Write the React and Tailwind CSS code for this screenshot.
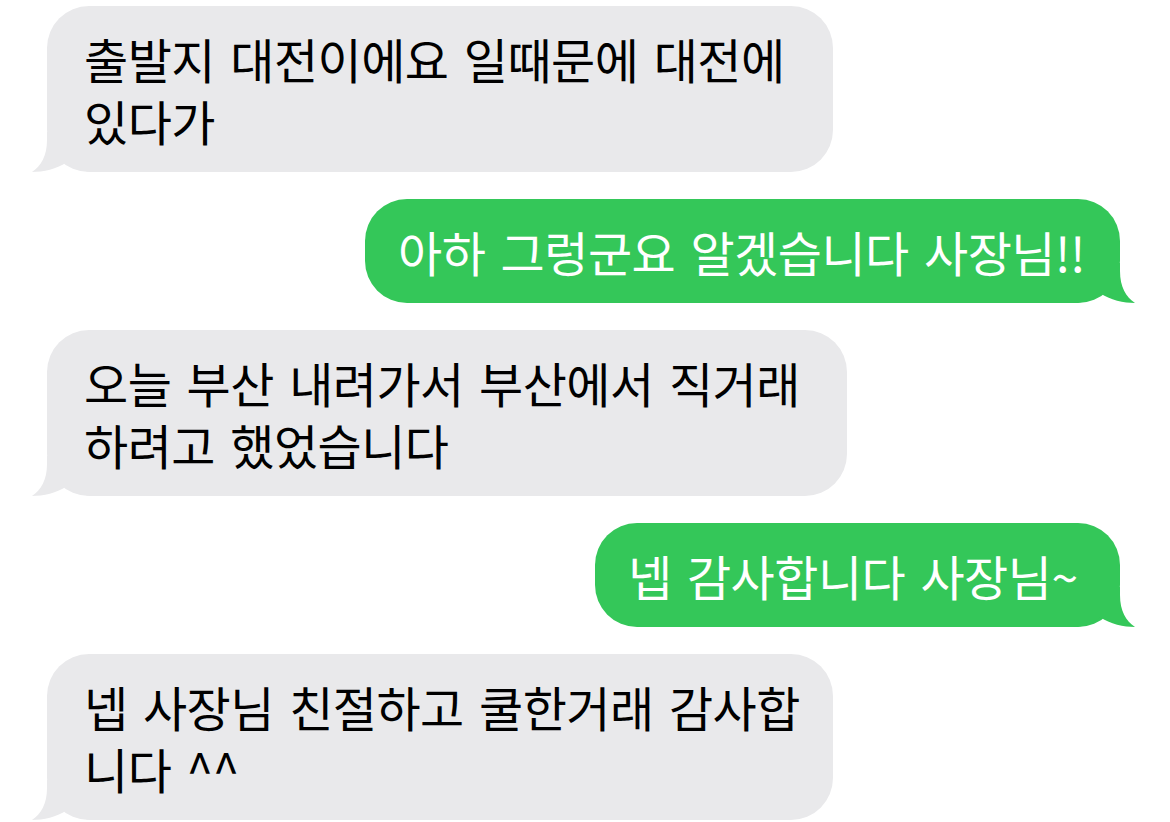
import { clsx } from 'clsx';

const messages = [
  { from: 'them', width: 'w-[786px]', text: '출발지 대전이에요 일때문에 대전에 있다가' },
  { from: 'me', width: 'w-[755px]', text: '아하 그렁군요 알겠습니다 사장님!!' },
  { from: 'them', width: 'w-[800px]', text: '오늘 부산 내려가서 부산에서 직거래 하려고 했었습니다' },
  { from: 'me', width: 'w-[525px]', text: '넵 감사합니다 사장님~' },
  { from: 'them', width: 'w-[786px]', text: '넵 사장님 친절하고 쿨한거래 감사합 니다 ^^' },
];

function Tail({ mine }) {
  return (
    <svg
      viewBox="0 0 64 40"
      className={clsx(
        'absolute bottom-0 h-[40px] w-[64px]',
        mine ? 'right-[-16px] -scale-x-100 fill-[#34c759]' : 'left-[-16px] fill-[#e9e9eb]'
      )}
    >
      <path d="M16 0 L16 8 C16 24 10 34 1 40 C12 40 26 37 36 30 C42 36 52 40 64 40 L64 0 Z" />
    </svg>
  );
}

function Bubble({ from, width, text }) {
  const mine = from === 'me';
  return (
    <div className={clsx('flex', mine ? 'justify-end pr-[50px]' : 'justify-start pl-[47px]')}>
      <div
        className={clsx(
          'relative rounded-[42px] py-[21px] text-[48px] leading-[62px] tracking-[-0.5px] [word-spacing:5px] break-keep',
          width,
          mine ? 'bg-[#34c759] pl-[33px] pr-[20px] text-white' : 'bg-[#e9e9eb] pl-[37px] pr-[20px] text-black'
        )}
      >
        <Tail mine={mine} />
        <p className="relative">{text}</p>
      </div>
    </div>
  );
}

export default function App() {
  return (
    <div className="h-[822px] w-[1170px] overflow-hidden bg-white font-['Noto_Sans_CJK_KR','Noto_Sans',sans-serif]">
      <div className="flex flex-col gap-[27px] pt-[6px]">
        {messages.map((m, i) => (
          <Bubble key={i} {...m} />
        ))}
      </div>
    </div>
  );
}
